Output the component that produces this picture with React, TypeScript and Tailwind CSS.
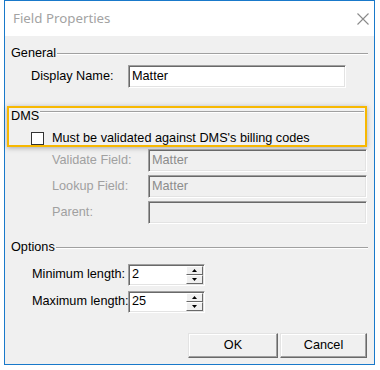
import React from 'react';

const sunken =
  'border border-t-[#a0a0a0] border-l-[#a0a0a0] border-r-white border-b-white shadow-[inset_1px_1px_0_#696969,inset_-1px_-1px_0_#e3e3e3]';

const GroupHeader: React.FC<{ label: string; top?: boolean }> = ({ label, top }) => (
  <div className={`flex ${top ? 'items-start' : 'items-center'} h-[13px]`}>
    <span className="leading-[13px]">{label}</span>
    <div className={`flex-1 ml-[1px] border-t border-[#a0a0a0] border-b border-b-white ${top ? 'mt-[1px]' : ''}`} />
  </div>
);

const Spin: React.FC = () => (
  <div className="flex flex-col w-[17px] h-full">
    {['up', 'down'].map(d => (
      <div
        key={d}
        className="flex-1 flex items-center justify-center bg-[#f0f0f0] border border-t-white border-l-white border-r-[#696969] border-b-[#696969]"
      >
        <svg width="5" height="3" viewBox="0 0 5 3">
          {d === 'up' ? <path d="M2.5 0 L5 3 L0 3 Z" fill="#000" /> : <path d="M0 0 L5 0 L2.5 3 Z" fill="#000" />}
        </svg>
      </div>
    ))}
  </div>
);

const App: React.FC = () => {
  return (
    <div className="w-[380px] h-[370px] bg-white" style={{ fontFamily: '"Liberation Sans", Arial, sans-serif' }}>
      <div className="ml-[4px] w-[371px] h-[365px] border border-[#1979ca] bg-[#f0f0f0] flex flex-col text-[12.7px] text-black">
        {/* title bar */}
        <div className="h-[35px] bg-white flex items-center justify-between pl-[8px] pr-[3px]">
          <span className="text-[#a3a3a3] text-[13.3px] pt-[1px]" style={{ fontFamily: '"Noto Sans", sans-serif' }}>
            Field Properties
          </span>
          <svg width="12" height="12" viewBox="0 0 12 12" className="mr-[2px]">
            <path d="M0.5 0.5 L11.5 11.5 M11.5 0.5 L0.5 11.5" stroke="#8a8a8a" strokeWidth="1.1" />
          </svg>
        </div>

        <div className="flex flex-col px-[6px] pt-[11px]">
          <GroupHeader label="General" />
          <div className="flex items-center mt-[5px] pl-[20px]">
            <span className="w-[97px] shrink-0">Display Name:</span>
            <div className={`w-[218px] h-[23px] bg-white flex items-center pl-[3px] ${sunken}`}>Matter</div>
          </div>

          {/* highlighted DMS group */}
          <div className="mt-[18px] -ml-[4px] mr-[1px] h-[41px] border-[2px] border-[#f7b801] shadow-[0_1px_5px_rgba(0,0,0,0.3)] pl-[2px] pr-[1px] pt-[2px]">
            <GroupHeader label="DMS" top />
            <div className="flex items-center mt-[6px] pl-[20px]">
              <div className="w-[13px] h-[13px] bg-white border border-[#333]" />
              <span className="ml-[8px]">Must be validated against DMS's billing codes</span>
            </div>
          </div>

          <div className="flex flex-col gap-[3px] mt-[2px] pl-[41px] text-[#a0a0a0]">
            {[
              ['Validate Field:', 'Matter'],
              ['Lookup Field:', 'Matter'],
              ['Parent:', ''],
            ].map(([l, v]) => (
              <div key={l} className="flex items-center">
                <span className="w-[96px] shrink-0">{l}</span>
                <div className={`w-[219px] h-[23px] bg-[#f0f0f0] flex items-center pl-[3px] text-[#8c8c8c] ${sunken}`}>{v}</div>
              </div>
            ))}
          </div>

          <div className="mt-[17px]">
            <GroupHeader label="Options" />
          </div>
          <div className="flex flex-col gap-[5px] mt-[10px] pl-[21px]">
            {[
              ['Minimum length:', '2'],
              ['Maximum length:', '25'],
            ].map(([l, v]) => (
              <div key={l} className="flex items-center">
                <span className="w-[96px] shrink-0 whitespace-nowrap">{l}</span>
                <div className={`w-[77px] h-[22px] bg-white flex items-center ${sunken}`}>
                  <span className="flex-1 pl-[3px]">{v}</span>
                  <div className="h-full py-[1px] pr-[1px]">
                    <Spin />
                  </div>
                </div>
              </div>
            ))}
          </div>

          <div className="flex justify-end gap-[2px] mt-[20px] pr-[1px]">
            {['OK', 'Cancel'].map((b, i) => (
              <button
                key={b}
                className={`${i === 0 ? 'w-[90px]' : 'w-[87px]'} h-[25px] bg-[#f0f0f0] border border-t-[#e3e3e3] border-l-[#e3e3e3] border-r-[#696969] border-b-[#696969] shadow-[inset_-1px_-1px_0_#a0a0a0,inset_1px_1px_0_#fff] text-[12.7px]`}
              >
                {b}
              </button>
            ))}
          </div>
        </div>
      </div>
    </div>
  );
};

export default App;
